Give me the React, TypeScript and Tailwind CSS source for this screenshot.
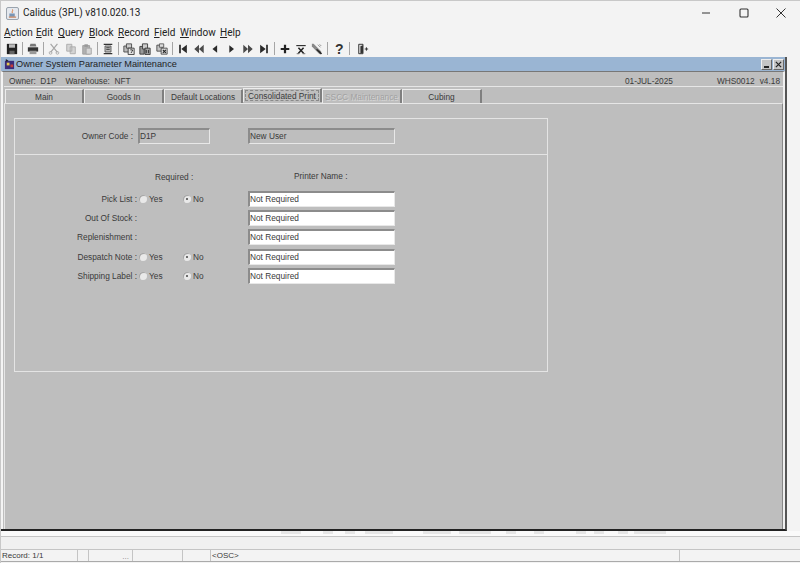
import { ReactNode } from 'react';

const TABS = [
  { label: 'Main', width: 'w-[79px]' },
  { label: 'Goods In', width: 'w-[80px]' },
  { label: 'Default Locations', width: 'w-[79px]' },
  { label: 'Consolidated Print', width: 'w-[79px]', active: true },
  { label: 'SSCC Maintenance', width: 'w-[80px]', disabled: true },
  { label: 'Cubing', width: 'w-[80px]' },
];

const MENUS = [
  { label: 'Action', ml: 'ml-[3px]', width: 'w-[28px]' },
  { label: 'Edit', ml: 'ml-[4px]', width: 'w-[18px]' },
  { label: 'Query', ml: 'ml-[4px]', width: 'w-[27px]' },
  { label: 'Block', ml: 'ml-[4px]', width: 'w-[25px]' },
  { label: 'Record', ml: 'ml-[4px]', width: 'w-[32px]' },
  { label: 'Field', ml: 'ml-[4px]', width: 'w-[22px]' },
  { label: 'Window', ml: 'ml-[4px]', width: 'w-[36px]' },
  { label: 'Help', ml: 'ml-[4px]', width: 'w-[20px]' },
];

const Icon = ({ children }: { children: ReactNode }) => (
  <div className="flex h-[15px] w-[16.2px] shrink-0 items-center justify-center">
    <svg viewBox="0 0 14 14" className="h-[12px] w-[12px]">{children}</svg>
  </div>
);

const Sep = () => <div className="mx-[2px] h-[13px] w-px shrink-0 bg-[#a5a5a5]" />;

function Toolbar() {
  return (
    <div className="flex h-[15px] items-center pl-[3px]">
      <Icon><path d="M1 1h12v12H1z" fill="#222" /><path d="M3.5 1.5h7v4h-7z" fill="#bbb" /><path d="M4 9h6v4H4z" fill="#666" /></Icon>
      <Sep />
      <Icon><path d="M4 1h6l1 3H3z" fill="#777" /><path d="M1 5h12v5H1z" fill="#333" /><path d="M3 9h8v4H3z" fill="#999" /></Icon>
      <Sep />
      <Icon><path d="M3 1l8 10M11 1L3 11" stroke="#a6a6a6" strokeWidth="1.4" fill="none" /><circle cx="3" cy="11.5" r="1.6" fill="none" stroke="#a6a6a6" /><circle cx="11" cy="11.5" r="1.6" fill="none" stroke="#a6a6a6" /></Icon>
      <Icon><path d="M2 1.5h6v8H2zM6 4.5h6v8H6z" fill="#d4d4d4" stroke="#a8a8a8" /></Icon>
      <Icon><path d="M2 3h8v10H2z" fill="#b0b0b0" stroke="#9a9a9a" /><path d="M4 1.5h4v3H4z" fill="#999" /><path d="M6 6h6v7H6z" fill="#d6d6d6" stroke="#a0a0a0" /></Icon>
      <Sep />
      <Icon><path d="M2 1.5h10M2 12.5h10" stroke="#333" strokeWidth="1.4" /><path d="M3.5 3.5h7v7h-7z" fill="#bbb" stroke="#555" /><path d="M5 5.5h4M5 7.5h4" stroke="#333" /></Icon>
      <Sep />
      <Icon><path d="M1 3.5h7v7H1z" fill="#bbb" stroke="#444" /><path d="M4 1h6v5H4z" fill="#ccc" stroke="#444" /><path d="M6 6h7v7.5H6z" fill="#e2e2e2" stroke="#333" /><path d="M8.5 8h2.5v1.5L9.7 10.5v1" stroke="#222" fill="none" /></Icon>
      <Icon><path d="M1 4h5v9H1z" fill="#999" stroke="#333" /><path d="M4 1h6v6H4z" fill="#ccc" stroke="#333" /><path d="M7 6h6v7.5H7z" fill="#aaa" stroke="#333" /><path d="M8.5 8v4M11 8v4" stroke="#222" /></Icon>
      <Icon><path d="M1 2.5h7v7H1z" fill="#c4c4c4" stroke="#444" /><path d="M4 1h5v4H4z" fill="#ddd" stroke="#555" /><path d="M6 6h7v7H6z" fill="#ddd" stroke="#444" /><path d="M8 8l3.5 3.5M11.5 8L8 11.5" stroke="#222" strokeWidth="1.3" /></Icon>
      <Sep />
      <Icon><path d="M2.5 2h2v10h-2zM11.5 2v10L5 7z" fill="#2a2a2a" /></Icon>
      <Icon><path d="M7 2v10L1.5 7zM12.5 2v10L7 7z" fill="#4a4a4a" /></Icon>
      <Icon><path d="M9.5 2.5v9L4 7z" fill="#2a2a2a" /></Icon>
      <Icon><path d="M5 2.5v9L10.5 7z" fill="#2a2a2a" /></Icon>
      <Icon><path d="M1.5 2v10L7 7zM7 2v10l5.5-5z" fill="#4a4a4a" /></Icon>
      <Icon><path d="M2.5 2v10L9 7zM9.5 2h2v10h-2z" fill="#2a2a2a" /></Icon>
      <Sep />
      <Icon><path d="M5.7 2h2.6v3.7H12v2.6H8.3V12H5.7V8.3H2V5.7h3.7z" fill="#222" /></Icon>
      <Icon><path d="M1.5 3h11" stroke="#333" strokeWidth="1.4" /><path d="M4 5.5l6 6.5M10 5.5l-6 6.5" stroke="#222" strokeWidth="1.8" /><path d="M2 12.5h3M9 12.5h3" stroke="#555" /></Icon>
      <Icon><path d="M1 1l2 0 9 9-2 3-9-9z" fill="#888" /><path d="M7 7l6 5-1.5 1.5L6 8z" fill="#222" /><path d="M8 2l3 3M10 1.5l2 2" stroke="#888" /></Icon>
      <Sep />
      <div className="ml-[1px] flex h-[15px] w-[16px] shrink-0 items-center justify-center text-[14px] leading-none font-bold text-[#333]">?</div>
      <Sep />
      <div className="ml-[3px]" />
      <Icon><path d="M2 1.5h5v11H2z" fill="#ddd" stroke="#222" /><path d="M7 2.5l-3 1.2v8.8l3-1.2z" fill="#333" /><path d="M9 7h4M11 5v4" stroke="#222" /></Icon>
    </div>
  );
}

function Tab({ label, width, active, disabled }: { label: string; width: string; active?: boolean; disabled?: boolean }) {
  return (
    <div
      className={`relative flex h-[14px] shrink-0 items-center justify-center border-t border-l border-r-2 border-t-[#ececec] border-l-[#ececec] border-r-[#7f7f7f] pt-[2px] whitespace-nowrap ${width} ${
        active ? '-translate-y-[1px]' : ''
      } ${disabled ? 'text-[#a2a2a2] [text-shadow:1px_1px_0_#d8d8d8]' : 'text-[#3a3a3a]'}`}
    >
      {active && <div className="absolute inset-[1px] border border-dashed border-[#8a8a8a]" />}
      {label}
    </div>
  );
}

function Field({ value, disabled, width }: { value: string; disabled?: boolean; width: string }) {
  return (
    <div
      className={`flex h-[16px] shrink-0 items-center border-t-2 border-l-2 border-b border-r border-t-[#8c8c8c] border-l-[#8c8c8c] border-r-[#e8e8e8] border-b-[#e8e8e8] text-[#3a3a3a] ${width} ${
        disabled ? 'bg-[#bebebe]' : 'bg-white'
      }`}
    >
      {value}
    </div>
  );
}

function Radio({ label, checked }: { label: string; checked?: boolean }) {
  return (
    <div className="flex items-center">
      <div className="flex h-[8px] w-[8px] items-center justify-center rounded-full bg-[#e9e9e9] shadow-[inset_1px_1px_0_#a5a5a5]">
        {checked && <div className="h-[2px] w-[2px] rounded-full bg-[#444]" />}
      </div>
      <span className="ml-[2px] text-[#3a3a3a]">{label}</span>
    </div>
  );
}

function Row({ label, radio, mt }: { label: string; radio?: boolean; mt: string }) {
  return (
    <div className={`flex h-[16px] items-center ${mt}`}>
      <div className="w-[122px] shrink-0 text-right text-[#3a3a3a]">{label}</div>
      <div className="flex w-[111px] shrink-0 items-center pl-[2px]">
        {radio && (
          <>
            <div className="w-[44px]"><Radio label="Yes" /></div>
            <Radio label="No" checked />
          </>
        )}
      </div>
      <Field value="Not Required" width="w-[147px]" />
    </div>
  );
}

export default function App() {
  return (
    <div className="flex h-[563px] w-[800px] flex-col overflow-hidden border-t border-l border-[#c8c8c8] bg-[#f3f3f3] font-['Liberation_Sans',Arial,sans-serif] text-[8.3px] leading-none">
      {/* Window title */}
      <div className="flex h-[24px] shrink-0 items-center">
        <div className="ml-[5px] flex h-[13px] w-[13px] items-center justify-center rounded-[2px] border border-[#9aa3ad] bg-[#e4e8ee]">
          <svg viewBox="0 0 10 10" className="h-[9px] w-[9px]">
            <path d="M5 0.5C6 2 3.5 3 5 4.5" stroke="#d9722c" fill="none" />
            <path d="M1.5 5h6v3.5h-6z" fill="#7895b5" />
            <path d="M1 9h8" stroke="#c0612a" />
          </svg>
        </div>
        <span className="ml-[4px] font-['Roboto',sans-serif] text-[10px] text-[#222]">Calidus (3PL) v810.020.13</span>
        <div className="ml-auto mr-[13px] flex items-center">
          <svg viewBox="0 0 12 12" className="mr-[25px] h-[12px] w-[12px]"><path d="M1 6h8" stroke="#333" strokeWidth="1" /></svg>
          <svg viewBox="0 0 12 12" className="mr-[25px] h-[12px] w-[12px]"><rect x="2" y="2" width="8" height="8" rx="1" stroke="#333" strokeWidth="1.1" fill="none" /></svg>
          <svg viewBox="0 0 12 12" className="h-[12px] w-[12px]"><path d="M1.5 1.5l9 9M10.5 1.5l-9 9" stroke="#333" strokeWidth="1" /></svg>
        </div>
      </div>

      {/* Menu */}
      <div className="flex h-[16px] shrink-0 items-center font-['Roboto',sans-serif] text-[10px] text-[#222]">
        {MENUS.map((m) => (
          <span key={m.label} className={`${m.ml} ${m.width} whitespace-nowrap`}>
            <span className="underline">{m.label[0]}</span>
            {m.label.slice(1)}
          </span>
        ))}
      </div>

      <Toolbar />

      {/* Inner form window */}
      <div className="mt-[1px] flex h-[474px] w-[786px] shrink-0 flex-col border-r-2 border-b-2 border-r-[#555] border-b-[#222] bg-[#bebebe]">
        <div className="flex h-[14px] shrink-0 items-center bg-[#9ab5d3] pt-[1px] text-[9.2px] text-[#222]">
          <svg viewBox="0 0 12 12" className="ml-[3px] h-[11px] w-[11px]">
            <path d="M1 2h10v9H1z" fill="#3b2d7a" />
            <path d="M3 4h3v3H3z" fill="#e6c84a" />
            <path d="M7 6h3v3H7z" fill="#c43c3c" />
            <path d="M2 0l3 2-3 1z" fill="#222" />
          </svg>
          <span className="ml-[1px]">Owner System Parameter Maintenance</span>
          <div className="ml-auto mr-[1px] flex gap-[1px]">
            <div className="flex h-[11px] w-[11px] items-end justify-center border border-t-[#eee] border-l-[#eee] border-r-[#666] border-b-[#666] bg-[#c4c4c4] pb-[1px]">
              <div className="h-[2px] w-[5px] bg-[#222]" />
            </div>
            <div className="flex h-[11px] w-[11px] items-center justify-center border border-t-[#eee] border-l-[#eee] border-r-[#666] border-b-[#666] bg-[#c4c4c4]">
              <svg viewBox="0 0 8 8" className="h-[7px] w-[7px]"><path d="M1 1l6 6M7 1l-6 6" stroke="#222" strokeWidth="1.4" /></svg>
            </div>
          </div>
        </div>

        <div className="flex flex-1 flex-col border-t border-l-2 border-r-2 border-t-[#777] border-l-[#f4f4f4] border-r-[#f0f0f0] pl-[1px]">
          {/* Owner strip */}
          <div className="flex h-[15px] shrink-0 items-center border-b border-[#e6e6e6] pt-[5px] pl-[5px] text-[#3a3a3a]">
            <span>Owner:&nbsp; D1P</span>
            <span className="ml-[9px]">Warehouse:&nbsp; NFT</span>
            <span className="ml-auto">01-JUL-2025</span>
            <span className="ml-[44px]">WHS0012</span>
            <span className="ml-[5px] mr-[3px]">v4.18</span>
          </div>

          {/* Tabs */}
          <div className="mt-[2px] flex h-[14px] shrink-0 items-end pl-[1px]">
            {TABS.map((t) => <Tab key={t.label} {...t} />)}
          </div>

          {/* Tab page */}
          <div className="flex-1 border-t border-l border-r border-t-[#e6e6e6] border-l-[#e6e6e6] border-r-[#888] pt-[14px] pl-[9px]">
            <div className="h-[254px] w-[534px] border border-[#e4e4e4]">
              <div className="flex h-[36px] items-start border-b border-[#e4e4e4] pt-[9px]">
                <div className="flex h-[16px] w-[118px] shrink-0 items-center justify-end text-[#3a3a3a]">Owner Code :</div>
                <div className="ml-[5px]"><Field value="D1P" disabled width="w-[72px]" /></div>
                <div className="ml-[38px]"><Field value="New User" disabled width="w-[147px]" /></div>
              </div>

              <div className="flex h-[19px] items-end text-[#3a3a3a]">
                <div className="ml-[140px] w-[96px] translate-y-[7px]">Required :</div>
                <div className="ml-[43px] translate-y-[6px]">Printer Name :</div>
              </div>
              <div className="mt-[17px]">
                <Row label="Pick List :" radio mt="" />
                <Row label="Out Of Stock :" mt="mt-[3px]" />
                <Row label="Replenishment :" mt="mt-[3px]" />
                <Row label="Despatch Note :" radio mt="mt-[4px]" />
                <Row label="Shipping Label :" radio mt="mt-[3px]" />
              </div>
            </div>
          </div>
        </div>
      </div>

      {/* Faint strip below the form */}
      <div className="flex h-[5px] shrink-0 items-start bg-[#fafafa] pl-[280px]">
        <div className="h-[3px] w-[20px] bg-[#e6e6e6]" />
        <div className="ml-[22px] h-[3px] w-[10px] bg-[#e6e6e6]" />
        <div className="ml-[12px] h-[3px] w-[10px] bg-[#e6e6e6]" />
        <div className="ml-[10px] h-[3px] w-[28px] bg-[#e6e6e6]" />
        <div className="ml-[30px] h-[3px] w-[28px] bg-[#e6e6e6]" />
        <div className="ml-[8px] h-[3px] w-[32px] bg-[#e6e6e6]" />
        <div className="ml-[15px] h-[3px] w-[10px] bg-[#e6e6e6]" />
        <div className="ml-[18px] h-[3px] w-[10px] bg-[#e6e6e6]" />
        <div className="ml-[32px] h-[3px] w-[10px] bg-[#e6e6e6]" />
        <div className="ml-[8px] h-[3px] w-[10px] bg-[#e6e6e6]" />
        <div className="ml-[14px] h-[3px] w-[10px] bg-[#e6e6e6]" />
        <div className="ml-[6px] h-[3px] w-[32px] bg-[#e6e6e6]" />
      </div>

      {/* Empty bar */}
      <div className="h-[14px] shrink-0 border-t border-b border-[#c4c4c4] bg-[#f0f0f0]" />

      {/* Status bar */}
      <div className="flex h-[12px] shrink-0 items-center border-b border-[#aaa] text-[8px] text-[#3a3a3a]">
        <div className="flex h-full w-[77px] items-center border-r border-[#c4c4c4] pl-[1px]">Record: 1/1</div>
        <div className="h-full w-[11px] border-r border-[#c4c4c4]" />
        <div className="flex h-full w-[44px] items-end justify-end border-r border-[#c4c4c4] pr-[3px] text-[#888]">...</div>
        <div className="h-full w-[50px] border-r border-[#c4c4c4]" />
        <div className="h-full w-[28px] border-r border-[#c4c4c4]" />
        <div className="flex h-full w-[469px] items-center border-r border-[#c4c4c4] pl-[1px]">&lt;OSC&gt;</div>
      </div>
    </div>
  );
}
